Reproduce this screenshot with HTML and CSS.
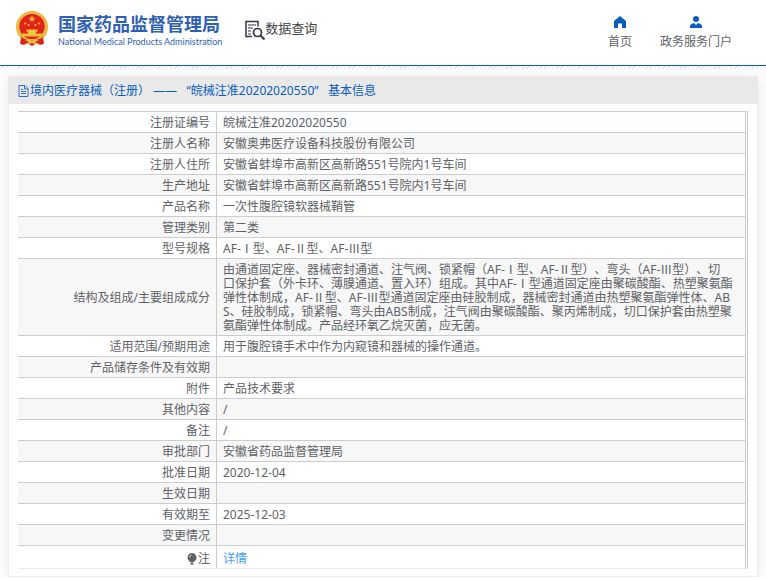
FILE: index.html
```html
<!DOCTYPE html>
<html lang="zh-CN">
<head>
<meta charset="UTF-8">
<meta name="viewport" content="width=device-width, initial-scale=1.0">
<title>国家药品监督管理局 数据查询</title>
<link rel="stylesheet" href="styles.css">
</head>
<body>
  <header class="header">
    <div class="brand">
      <!-- National emblem -->
      <svg class="emblem" viewBox="0 0 32 36" aria-hidden="true">
        <path d="M5 26 L4 33 L8 34 L11 32 L16 35 L21 32 L24 34 L28 33 L27 26z" fill="#d9261c"/>
        <circle cx="16" cy="16" r="16" fill="#e9b13a"/>
        <circle cx="16" cy="16" r="14.5" fill="none" stroke="#f5d060" stroke-width="1" stroke-dasharray="2 1"/>
        <circle cx="16" cy="15.500" r="12.600" fill="#e2231a"/>
        <path d="M16 4.500l.9 2.300 2.400.1-1.900 1.500.7 2.400-2.100-1.400-2.100 1.400.7-2.400-1.900-1.500 2.400-.1z" fill="#f8c83c"/>
        <g fill="#f8c83c">
          <circle cx="9" cy="12.500" r="1"/>
          <circle cx="12.500" cy="14" r="1"/>
          <circle cx="19.500" cy="14" r="1"/>
          <circle cx="23" cy="12.500" r="1"/>
          <path d="M11 18.500h10l1 2H10zM12 20.500h8v2h-8zM6 22.500h20l-1.500 3h-17z"/>
        </g>
        <path d="M5 26q5 4 11 3 6 1 11-3l-1 4q-5 3-10 1-5 2-10-1z" fill="#d9261c"/>
        <path d="M9 29l5-1 2 2 2-2 5 1-4 2 3 3-6-2-6 2 3-3z" fill="#f2c044"/>
      </svg>
      <div class="brand-text">
        <div class="brand-name">国家药品监督管理局</div>
        <div class="brand-en">National Medical Products Administration</div>
      </div>
    </div>
    <div class="section-name">
      <svg class="search-icon" viewBox="0 0 20 20" aria-hidden="true">
        <g fill="none" stroke="#34344a">
          <path d="M7 16.500H1V1.500h12v5" stroke-width="1.500"/>
          <path d="M3 5h8M3 8h5M3 11h3M3 14h3" stroke-width="1.200"/>
          <circle cx="12.500" cy="12.500" r="4" stroke-width="1.700"/>
          <path d="M15.500 15.500l4 4" stroke-width="2"/>
        </g>
      </svg>
      <span>数据查询</span>
    </div>
    <nav class="nav">
      <a href="#" class="nav-item">
        <svg class="nav-icon" viewBox="0 0 12 12" aria-hidden="true">
          <path d="M6 0L0 5v7h4V7.500h4V12h4V5z" fill="#0a5cbd"/>
        </svg>
        <span>首页</span>
      </a>
      <a href="#" class="nav-item">
        <svg class="nav-icon" viewBox="0 0 12 12" aria-hidden="true">
          <circle cx="6" cy="3" r="3" fill="#0a5cbd"/>
          <path d="M0 12V9.500Q1 7.500 4 7l2 2 2-2q3 .5 4 2.500V12z" fill="#0a5cbd"/>
        </svg>
        <span>政务服务门户</span>
      </a>
    </nav>
  </header>
  <div class="hatch"></div>

  <main class="card">
    <h1 class="card-title">
      <svg class="doc-icon" viewBox="0 0 11 12" aria-hidden="true">
        <path d="M1 .5h6l3 3v8H1zM6.500.5V4H10M3 4.500h2M3 6.500h5M3 8.500h5" fill="none" stroke="#2a6fc4"/>
      </svg>
      <span>境内医疗器械（注册） ——&nbsp;&nbsp; “皖械注准20202020550”&nbsp;&nbsp; 基本信息</span>
    </h1>
    <div class="table-wrap">
      <table class="info">
        <tbody>
          <tr><th scope="row">注册证编号</th><td>皖械注准20202020550</td></tr>
          <tr><th scope="row">注册人名称</th><td>安徽奥弗医疗设备科技股份有限公司</td></tr>
          <tr><th scope="row">注册人住所</th><td>安徽省蚌埠市高新区高新路551号院内1号车间</td></tr>
          <tr><th scope="row">生产地址</th><td>安徽省蚌埠市高新区高新路551号院内1号车间</td></tr>
          <tr><th scope="row">产品名称</th><td>一次性腹腔镜软器械鞘管</td></tr>
          <tr><th scope="row">管理类别</th><td>第二类</td></tr>
          <tr><th scope="row">型号规格</th><td>AF-Ⅰ型、AF-Ⅱ型、AF-Ⅲ型</td></tr>
          <tr><th scope="row">结构及组成/主要组成成分</th><td>由通道固定座、器械密封通道、注气阀、锁紧帽（AF-Ⅰ型、AF-Ⅱ型）、弯头（AF-Ⅲ型）、切<br>口保护套（外卡环、薄膜通道、置入环）组成。其中AF-Ⅰ型通道固定座由聚碳酸酯、热塑聚氨酯<br>弹性体制成，AF-Ⅱ型、AF-Ⅲ型通道固定座由硅胶制成，器械密封通道由热塑聚氨酯弹性体、AB<br>S、硅胶制成，锁紧帽、弯头由ABS制成，注气阀由聚碳酸酯、聚丙烯制成，切口保护套由热塑聚<br>氨酯弹性体制成。产品经环氧乙烷灭菌，应无菌。</td></tr>
          <tr><th scope="row">适用范围/预期用途</th><td>用于腹腔镜手术中作为内窥镜和器械的操作通道。</td></tr>
          <tr><th scope="row">产品储存条件及有效期</th><td></td></tr>
          <tr><th scope="row">附件</th><td>产品技术要求</td></tr>
          <tr><th scope="row">其他内容</th><td>/</td></tr>
          <tr><th scope="row">备注</th><td>/</td></tr>
          <tr><th scope="row">审批部门</th><td>安徽省药品监督管理局</td></tr>
          <tr><th scope="row">批准日期</th><td>2020-12-04</td></tr>
          <tr><th scope="row">生效日期</th><td></td></tr>
          <tr><th scope="row">有效期至</th><td>2025-12-03</td></tr>
          <tr><th scope="row">变更情况</th><td></td></tr>
          <tr class="note">
            <th scope="row"><svg class="bulb" viewBox="0 0 10 12" aria-hidden="true"><path d="M5 0a4.500 4.500 0 0 1 3 7.800L7 9H3L2 7.800A4.500 4.500 0 0 1 5 0zM3.500 9.500h3V11L5 12 3.500 11z" fill="#606266"/><path d="M2.500 4.500Q2.700 2.500 4.500 2" fill="none" stroke="#fff" stroke-width=".8"/></svg>注</th>
            <td><a href="#" class="detail">详情</a></td>
          </tr>
        </tbody>
      </table>
    </div>
  </main>
</body>
</html>
```
FILE: styles.css
```css
* {
  box-sizing: border-box;
}
body {
  margin: 0;
  background: #fff;
  color: #606266;
  font-family: "Noto Sans", "Noto Sans CJK SC", sans-serif;
  font-size: 12px;
  line-height: 14px;
  text-spacing-trim: space-all;
}
a {
  text-decoration: none;
}
svg {
  display: block;
}
.header {
  display: flex;
  align-items: flex-start;
  height: 66px;
  padding: 11px 34px 0 16px;
  border-bottom: 1px solid #0a5cbd;
}
.brand {
  display: flex;
  gap: 10px;
}
.emblem {
  width: 32px;
  height: 36px;
}
.brand-text {
  padding-top: 2px;
  color: #2f5fb3;
  white-space: nowrap;
}
.brand-name {
  font-size: 18px;
  font-weight: bold;
  line-height: 22px;
}
.brand-en {
  font-family: Lato, "Liberation Sans", sans-serif;
  font-size: 9px;
  line-height: 14px;
}
.section-name {
  display: flex;
  margin: 9px 0 0 23px;
  color: #444;
  font-size: 13px;
  line-height: 16px;
  white-space: nowrap;
}
.search-icon {
  width: 20px;
  height: 20px;
}
.nav {
  display: flex;
  gap: 28px;
  margin-left: auto;
  padding-top: 5px;
}
.nav-item {
  display: flex;
  flex-direction: column;
  align-items: center;
  gap: 7px;
  color: #606266;
}
.nav-icon {
  width: 12px;
  height: 12px;
}
/* Thin hatched strip under the header */
.hatch {
  height: 3px;
  background: repeating-linear-gradient(135deg, #fff 0, #fff 2px, #e2e2e2 2px, #e2e2e2 3px);
}
/* Detail card */
.card {
  margin: 7px 8px 0;
  padding-bottom: 8px;
  background: #fff;
  box-shadow: inset 0 0 0 1px #ebeef5, 0 2px 12px rgba(0, 0, 0, 0.1);
}
.card-title {
  display: flex;
  align-items: center;
  gap: 1px;
  height: 28px;
  margin: 0;
  padding: 1px 10px 0;
  background: #e9e9e9;
  color: #0a5cbd;
  font-size: 12px;
  font-weight: normal;
}
.doc-icon {
  width: 11px;
  height: 12px;
}
.table-wrap {
  margin: 7px 10px 0;
  padding-right: 1px;
  border-right: 1px solid #c9c9d0;
  border-bottom: 1px solid #ebebf3;
}
.info {
  width: 100%;
  border-collapse: separate;
  border-spacing: 0;
  table-layout: fixed;
}
.info th,
.info td {
  padding: 4px 6px 2px;
  border-top: 1px solid #ccc;
  border-right: 1px solid #ccc;
  height: 21px;
  font-weight: normal;
  word-break: break-all;
}
.info th {
  width: 199px;
  text-align: right;
}
.info td {
  text-align: left;
}
.info tr:nth-child(even) {
  background: #f7f7f7;
}
.info tr:first-child {
  background: #fbfdff;
}
.info .note th,
.info .note td {
  padding-top: 6px;
}
.bulb {
  display: inline-block;
  width: 10px;
  height: 12px;
  margin-right: 1px;
  vertical-align: -2px;
}
.detail {
  color: #409eff;
}
```
